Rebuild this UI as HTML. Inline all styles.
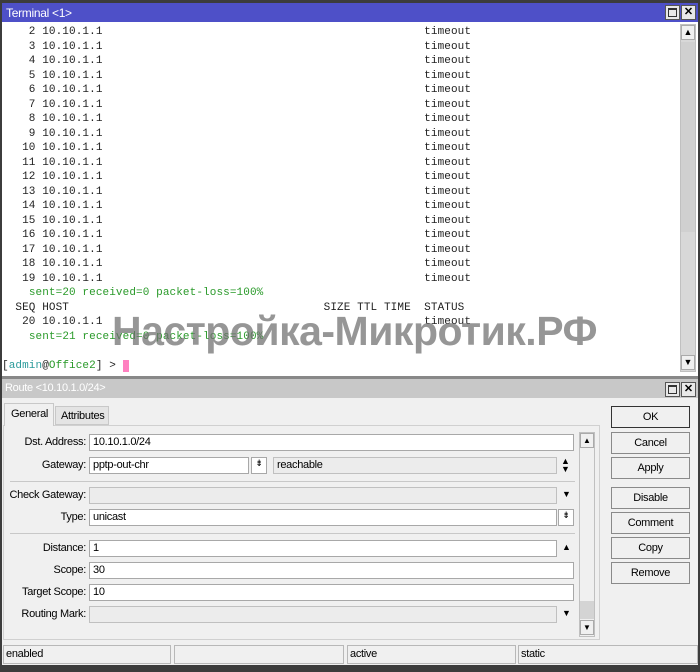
<!DOCTYPE html>
<html><head><meta charset="utf-8"><style>
*{margin:0;padding:0;box-sizing:border-box}
body{width:700px;height:672px;background:#3c3c3c;position:relative;overflow:hidden;font-family:"Liberation Sans",sans-serif;font-size:11px;color:#000}
.a{position:absolute}
pre{font-family:"Liberation Mono",monospace;font-size:11px;letter-spacing:.1px;line-height:14.5px;color:#222}
.g{color:#2a9a2a}.c{color:#2a9a9a}
.lbl{position:absolute;text-align:right;width:84px;left:2px;font-size:11px;letter-spacing:-.3px}
.in{position:absolute;height:17px;border:1px solid #a8a8a8;background:#fff;padding:1px 3px;font-size:11px;letter-spacing:-.3px}
.dis{background:#ececec;border-color:#c0c0c0}
.btn{position:absolute;left:611px;width:79px;height:22px;border:1px solid #8a8a8a;background:#f0f0f0;text-align:center;line-height:20px;font-size:11px;letter-spacing:-.3px}
.sb{position:absolute;height:19px;border:1px solid #b8b8b8;top:645px;padding:2px 2px;font-size:11px;letter-spacing:-.3px}
.wb{position:absolute;width:15px;height:15px;border:1px solid #555;background:#e8e8e8;font-size:11px;line-height:13px;text-align:center}
</style></head><body>
<div class="a" style="left:2px;top:3px;width:696px;height:19px;background:#4e50c8;color:#fff;padding:3px 4px;font-size:12px;letter-spacing:-.3px">Terminal &lt;1&gt;</div>
<div class="wb" style="left:665px;top:5px"><div style="margin:2px;width:9px;height:9px;border:1px solid #333;border-top-width:2px"></div></div>
<div class="wb" style="left:681px;top:5px;font-weight:bold">✕</div>
<div class="a" style="left:2px;top:22px;width:696px;height:354px;background:#fff"></div>
<div class="a" style="left:680px;top:24px;width:16px;height:348px;background:#d8d8d8;border:1px solid #c0c0c0"></div>
<div class="a" style="left:681px;top:25px;width:14px;height:15px;background:#f0f0f0;border:1px solid #aaa;font-size:9px;text-align:center;line-height:13px">▲</div>
<div class="a" style="left:681px;top:42px;width:14px;height:190px;background:#d0d0d0"></div>
<div class="a" style="left:681px;top:355px;width:14px;height:15px;background:#f0f0f0;border:1px solid #aaa;font-size:9px;text-align:center;line-height:13px">▼</div>
<pre class="a" style="left:2px;top:25px">    2 10.10.1.1                                                timeout
    3 10.10.1.1                                                timeout
    4 10.10.1.1                                                timeout
    5 10.10.1.1                                                timeout
    6 10.10.1.1                                                timeout
    7 10.10.1.1                                                timeout
    8 10.10.1.1                                                timeout
    9 10.10.1.1                                                timeout
   10 10.10.1.1                                                timeout
   11 10.10.1.1                                                timeout
   12 10.10.1.1                                                timeout
   13 10.10.1.1                                                timeout
   14 10.10.1.1                                                timeout
   15 10.10.1.1                                                timeout
   16 10.10.1.1                                                timeout
   17 10.10.1.1                                                timeout
   18 10.10.1.1                                                timeout
   19 10.10.1.1                                                timeout
    <span class="g">sent=20 received=0 packet-loss=100%</span>
  SEQ HOST                                      SIZE TTL TIME  STATUS
   20 10.10.1.1                                                timeout
    <span class="g">sent=21 received=0 packet-loss=100%</span>

[<span class="c">admin</span>@<span class="g">Office2</span>] &gt; <span style="background:#ff80c0"> </span></pre>
<div class="a" style="left:112px;top:308px;font-size:41px;font-weight:bold;color:rgba(110,110,110,.72);letter-spacing:-.5px;white-space:nowrap">Настройка-Микротик.РФ</div>
<div class="a" style="left:2px;top:376px;width:696px;height:3px;background:#888"></div>
<div class="a" style="left:2px;top:379px;width:696px;height:19px;background:#c8c8c8;color:#fff;padding:3px 3px;letter-spacing:-.3px">Route &lt;10.10.1.0/24&gt;</div>
<div class="wb" style="left:665px;top:382px"><div style="margin:2px;width:9px;height:9px;border:1px solid #333;border-top-width:2px"></div></div>
<div class="wb" style="left:681px;top:382px;font-weight:bold">✕</div>
<div class="a" style="left:2px;top:398px;width:696px;height:267px;background:#f0f0f0"></div>
<div class="a" style="left:3px;top:425px;width:597px;height:215px;border:1px solid #d0d0d0;background:#f0f0f0"></div>
<div class="a" style="left:4px;top:403px;width:50px;height:23px;border:1px solid #c8c8c8;border-bottom:none;background:#f0f0f0;padding:4px 6px;letter-spacing:-.3px">General</div>
<div class="a" style="left:55px;top:406px;width:54px;height:19px;border:1px solid #c8c8c8;background:#e4e4e4;padding:3px 5px;letter-spacing:-.3px">Attributes</div>

<div class="lbl" style="top:436px">Dst. Address:</div><div class="in" style="left:89px;top:434px;width:485px">10.10.1.0/24</div>
<div class="lbl" style="top:459px">Gateway:</div><div class="in" style="left:89px;top:457px;width:160px">pptp-out-chr</div>
<div class="in" style="left:251px;top:457px;width:16px;text-align:center;padding:0;font-size:9px">⇟</div>
<div class="in dis" style="left:273px;top:457px;width:284px">reachable</div>
<div class="a" style="left:561px;top:457px;font-size:9px;line-height:8px">▲<br>▼</div>
<div class="a" style="left:10px;top:481px;width:565px;height:1px;background:#c8c8c8"></div>
<div class="lbl" style="top:489px">Check Gateway:</div><div class="in dis" style="left:89px;top:487px;width:468px"></div>
<div class="a" style="left:562px;top:489px;font-size:9px">▼</div>
<div class="lbl" style="top:511px">Type:</div><div class="in" style="left:89px;top:509px;width:468px">unicast</div>
<div class="in" style="left:558px;top:509px;width:16px;text-align:center;padding:0;font-size:9px">⇟</div>
<div class="a" style="left:10px;top:533px;width:565px;height:1px;background:#c8c8c8"></div>
<div class="lbl" style="top:542px">Distance:</div><div class="in" style="left:89px;top:540px;width:468px">1</div>
<div class="a" style="left:562px;top:542px;font-size:9px">▲</div>
<div class="lbl" style="top:564px">Scope:</div><div class="in" style="left:89px;top:562px;width:485px">30</div>
<div class="lbl" style="top:586px">Target Scope:</div><div class="in" style="left:89px;top:584px;width:485px">10</div>
<div class="lbl" style="top:608px">Routing Mark:</div><div class="in dis" style="left:89px;top:606px;width:468px"></div>
<div class="a" style="left:562px;top:608px;font-size:9px">▼</div>
<div class="a" style="left:579px;top:432px;width:16px;height:205px;border:1px solid #c0c0c0;background:#f0f0f0"></div>
<div class="a" style="left:580px;top:433px;width:14px;height:15px;border:1px solid #aaa;font-size:8px;text-align:center;line-height:13px">▲</div>
<div class="a" style="left:580px;top:601px;width:14px;height:18px;background:#d4d4d4"></div>
<div class="a" style="left:580px;top:620px;width:14px;height:15px;border:1px solid #aaa;font-size:8px;text-align:center;line-height:13px">▼</div>

<div class="btn" style="top:406px;border-color:#333">OK</div>
<div class="btn" style="top:432px">Cancel</div>
<div class="btn" style="top:457px">Apply</div>
<div class="btn" style="top:487px">Disable</div>
<div class="btn" style="top:512px">Comment</div>
<div class="btn" style="top:537px">Copy</div>
<div class="btn" style="top:562px">Remove</div>

<div class="sb" style="left:3px;width:168px">enabled</div>
<div class="sb" style="left:174px;width:170px"></div>
<div class="sb" style="left:347px;width:169px">active</div>
<div class="sb" style="left:518px;width:180px">static</div>
</body></html>
